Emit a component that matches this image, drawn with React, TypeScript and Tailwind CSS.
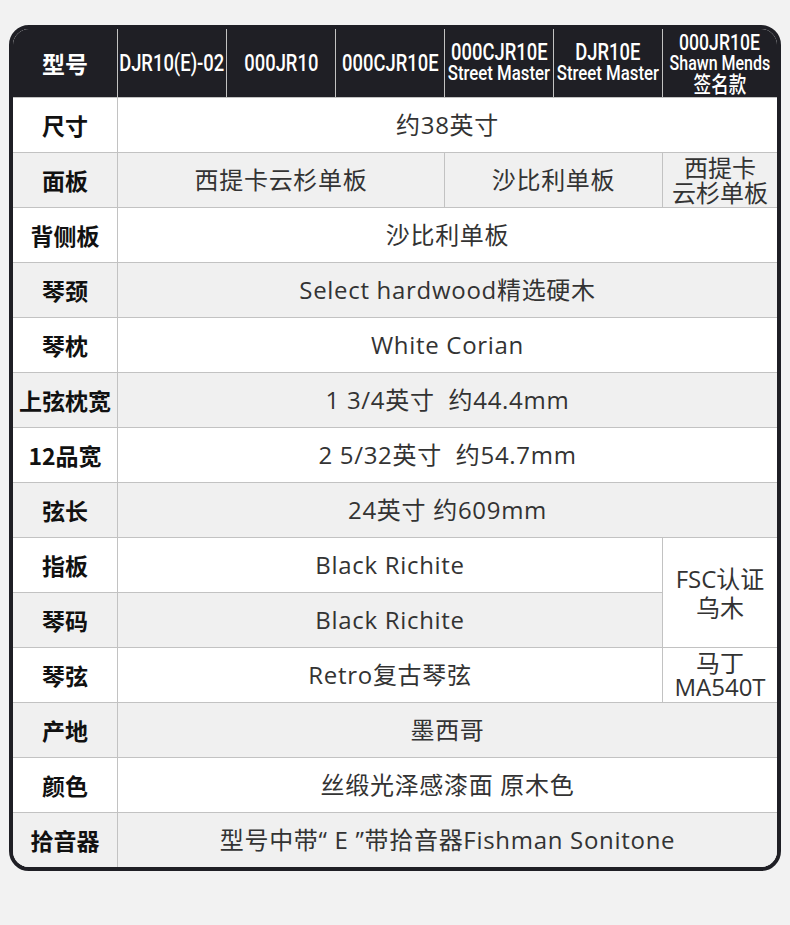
import { ReactNode } from 'react';

/* ============================================
   SPEC TABLE
   ============================================ */

const BODY = "font-['Open_Sans','Noto_Sans_CJK_SC',sans-serif]";
const COND = "font-['Roboto','Noto_Sans_CJK_SC',sans-serif]";

function Label({ children, gray }: { children: ReactNode; gray?: boolean }) {
  return (
    <div
      className={`flex items-center justify-center font-bold text-[23px] text-[#111] font-['Noto_Sans_CJK_SC',sans-serif] ${
        gray ? 'bg-[#f0f0f0]' : 'bg-white'
      }`}
    >
      {children}
    </div>
  );
}

function Cell({
  children,
  gray,
  className = '',
}: {
  children: ReactNode;
  gray?: boolean;
  className?: string;
}) {
  return (
    <div
      className={`flex min-w-0 flex-col items-center justify-center text-center text-[24px] tracking-[0.7px] text-[#333] ${BODY} ${
        gray ? 'bg-[#f0f0f0]' : 'bg-white'
      } ${className}`}
    >
      {children}
    </div>
  );
}

function Head({ lines }: { lines: { t: string; size: string }[] }) {
  return (
    <div className="flex min-w-0 flex-col items-center justify-center bg-[#1f1f25] text-white leading-[21px]">
      {lines.map((l, i) => (
        <span key={i} className={`inline-block whitespace-nowrap scale-x-[0.8] font-medium ${COND} ${l.size}`}>
          {l.t}
        </span>
      ))}
    </div>
  );
}

// rows spanning all six model columns
const simpleRows: { label: string; value: string }[] = [
  { label: '背侧板', value: '沙比利单板' },
  { label: '琴颈', value: 'Select hardwood精选硬木' },
  { label: '琴枕', value: 'White Corian' },
  { label: '上弦枕宽', value: '1 3/4英寸  约44.4mm' },
  { label: '12品宽', value: '2 5/32英寸  约54.7mm' },
  { label: '弦长', value: '24英寸 约609mm' },
];

export default function App() {
  return (
    <div className="min-h-[925px] w-[790px] bg-[#f2f2f2] pt-[25px] pl-[9px]">
      <div className="w-[772px] rounded-[20px] border-4 border-[#1f1f25] overflow-hidden">
        <div className="grid grid-cols-[104px_repeat(5,108px)_minmax(0,1fr)] grid-rows-[68px_repeat(14,54px)] gap-px bg-[#c2c2c2]">
          {/* header */}
          <div className="flex items-center justify-center bg-[#1f1f25] text-white font-bold text-[23px] font-['Noto_Sans_CJK_SC',sans-serif]">
            型号
          </div>
          <Head lines={[{ t: 'DJR10(E)-02', size: 'text-[23px]' }]} />
          <Head lines={[{ t: '000JR10', size: 'text-[23px]' }]} />
          <Head lines={[{ t: '000CJR10E', size: 'text-[23px]' }]} />
          <Head
            lines={[
              { t: '000CJR10E', size: 'text-[23px]' },
              { t: 'Street Master', size: 'text-[21px]' },
            ]}
          />
          <Head
            lines={[
              { t: 'DJR10E', size: 'text-[23px]' },
              { t: 'Street Master', size: 'text-[21px]' },
            ]}
          />
          <Head
            lines={[
              { t: '000JR10E', size: 'text-[22px]' },
              { t: 'Shawn Mends', size: 'text-[20px]' },
              { t: '签名款', size: 'text-[22px]' },
            ]}
          />

          {/* 尺寸 */}
          <Label>尺寸</Label>
          <Cell className="col-span-6">约38英寸</Cell>

          {/* 面板 */}
          <Label gray>面板</Label>
          <Cell gray className="col-span-3">西提卡云杉单板</Cell>
          <Cell gray className="col-span-2">沙比利单板</Cell>
          <Cell gray className="leading-[25px] text-[23px] tracking-normal">
            <span>西提卡</span>
            <span>云杉单板</span>
          </Cell>

          {simpleRows.map((r, i) => (
            <div key={r.label} className="contents">
              <Label gray={i % 2 === 1}>{r.label}</Label>
              <Cell gray={i % 2 === 1} className="col-span-6">
                <span className="whitespace-pre">{r.value}</span>
              </Cell>
            </div>
          ))}

          {/* 指板 / 琴码 */}
          <Label>指板</Label>
          <Cell className="col-span-5">Black Richite</Cell>
          <Cell className="row-span-2 leading-[29px] text-[23px] tracking-normal">
            <span>FSC认证</span>
            <span>乌木</span>
          </Cell>
          <Label gray>琴码</Label>
          <Cell gray className="col-span-5">Black Richite</Cell>

          {/* 琴弦 */}
          <Label>琴弦</Label>
          <Cell className="col-span-5">Retro复古琴弦</Cell>
          <Cell className="leading-[24px] text-[22px] tracking-normal">
            <span>马丁</span>
            <span>MA540T</span>
          </Cell>

          <Label gray>产地</Label>
          <Cell gray className="col-span-6">墨西哥</Cell>

          <Label>颜色</Label>
          <Cell className="col-span-6">丝缎光泽感漆面 原木色</Cell>

          <Label gray>拾音器</Label>
          <Cell gray className="col-span-6">型号中带“ E ”带拾音器Fishman Sonitone</Cell>
        </div>
      </div>
    </div>
  );
}
